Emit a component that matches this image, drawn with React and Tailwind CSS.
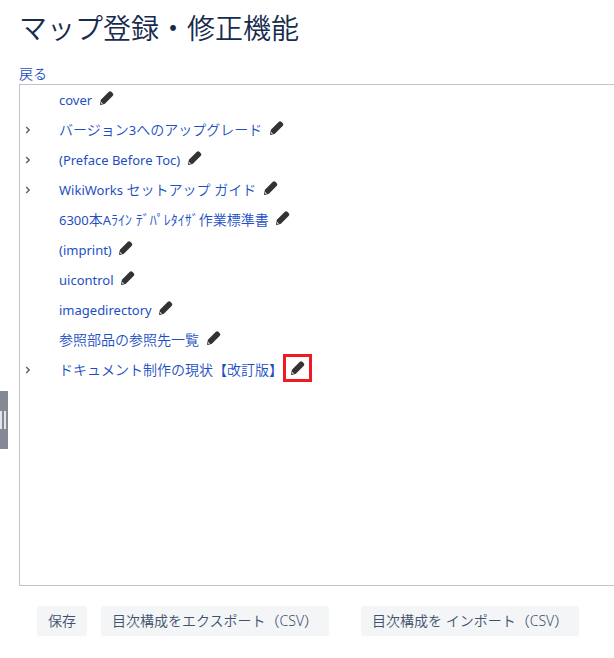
import React from 'react';

const items = [
  { id: 1, title: 'cover' },
  { id: 2, title: 'バージョン3へのアップグレード', expandable: true },
  { id: 3, title: '(Preface Before Toc)', expandable: true },
  { id: 4, title: 'WikiWorks セットアップ ガイド', expandable: true },
  { id: 5, title: '6300本Aﾗｲﾝ ﾃﾞﾊﾟﾚﾀｲｻﾞ作業標準書' },
  { id: 6, title: '(imprint)' },
  { id: 7, title: 'uicontrol' },
  { id: 8, title: 'imagedirectory' },
  { id: 9, title: '参照部品の参照先一覧' },
  { id: 10, title: 'ドキュメント制作の現状【改訂版】', expandable: true, highlighted: true },
];

const PencilIcon = () => (
  <svg className="w-[14px] h-[14px]" viewBox="0 0 14 14" fill="#333333" aria-hidden="true">
    <path d="M0.9 8.8L8.6 1.1Q10.1-.3 11.6 1L12.8 2.2Q13.9 3.7 12.6 5L4.9 12.7L0.9 13.9Q-.1 14 .1 13.1z" />
    <path d="M1.3 10.9l1.6 1.6-1 .4-1-1z" fill="#ffffff" />
  </svg>
);

const ChevronIcon = () => (
  <svg className="w-2 h-2" viewBox="0 0 8 8" fill="none" stroke="#5e6470" strokeWidth="1.5" aria-hidden="true">
    <path d="M2.2 1l3 3-3 3" />
  </svg>
);

// Latin words are set one size smaller than the Japanese text around them
const Title = ({ text }) =>
  text.split(/([\x21-\x7e]+(?: [\x21-\x7e]+)*)/).map((part, i) =>
    i % 2 ? (
      <span key={i} className="text-[13px] font-normal">
        {part}
      </span>
    ) : (
      part
    )
  );

const TreeItem = ({ item }) => (
  <li className="flex items-center h-[30px]">
    <div className="w-[39px] pl-1 flex items-center shrink-0">
      {item.expandable && (
        <button type="button" aria-label="展開">
          <ChevronIcon />
        </button>
      )}
    </div>
    <a href="#" className="text-[#1d4fc4] whitespace-nowrap">
      <Title text={item.title} />
    </a>
    <button
      type="button"
      aria-label="編集"
      className={`w-[29px] h-7 flex items-center justify-center shrink-0 border-[3px] mb-1 ${
        item.highlighted ? 'border-[#ed1c24]' : 'border-transparent'
      }`}
    >
      <PencilIcon />
    </button>
  </li>
);

const ActionButton = ({ children, className = '' }) => (
  <button
    type="button"
    className={`h-[30px] px-[11px] bg-[#f4f5f7] text-[#42526e] rounded-[3px] whitespace-nowrap ${className}`}
  >
    {children}
  </button>
);

const App = () => {
  return (
    <div className="relative min-h-screen bg-white overflow-hidden text-sm font-[350] font-['Noto_Sans','Noto_Sans_CJK_JP',sans-serif]">
      {/* Sidebar handle */}
      <button
        type="button"
        aria-label="サイドバー"
        className="absolute left-0 top-[391px] w-2 h-[58px] bg-[#858995] flex items-center gap-[2px]"
      >
        <span className="w-[2px] h-[18px] bg-[#e4e5e8]"></span>
        <span className="w-[2px] h-[18px] bg-[#e4e5e8]"></span>
      </button>

      <main className="pl-[19px] pt-2">
        <h1 className="text-[28px] leading-10 font-[350] text-[#172b4d]">マップ登録・修正機能</h1>
        <div className="pt-4 leading-5">
          <a href="#" className="text-[#1d4fc4]">戻る</a>
        </div>

        {/* Map tree */}
        <ul className="min-h-[502px] border border-r-0 border-[#c4c4c4]">
          {items.map((item) => (
            <TreeItem key={item.id} item={item} />
          ))}
        </ul>

        {/* Actions */}
        <div className="flex pt-5 pl-[18px] pb-5">
          <ActionButton>保存</ActionButton>
          <ActionButton className="ml-[14px]">目次構成をエクスポート（CSV）</ActionButton>
          <ActionButton className="ml-8">目次構成を インポート（CSV）</ActionButton>
        </div>
      </main>
    </div>
  );
};

export default App;
